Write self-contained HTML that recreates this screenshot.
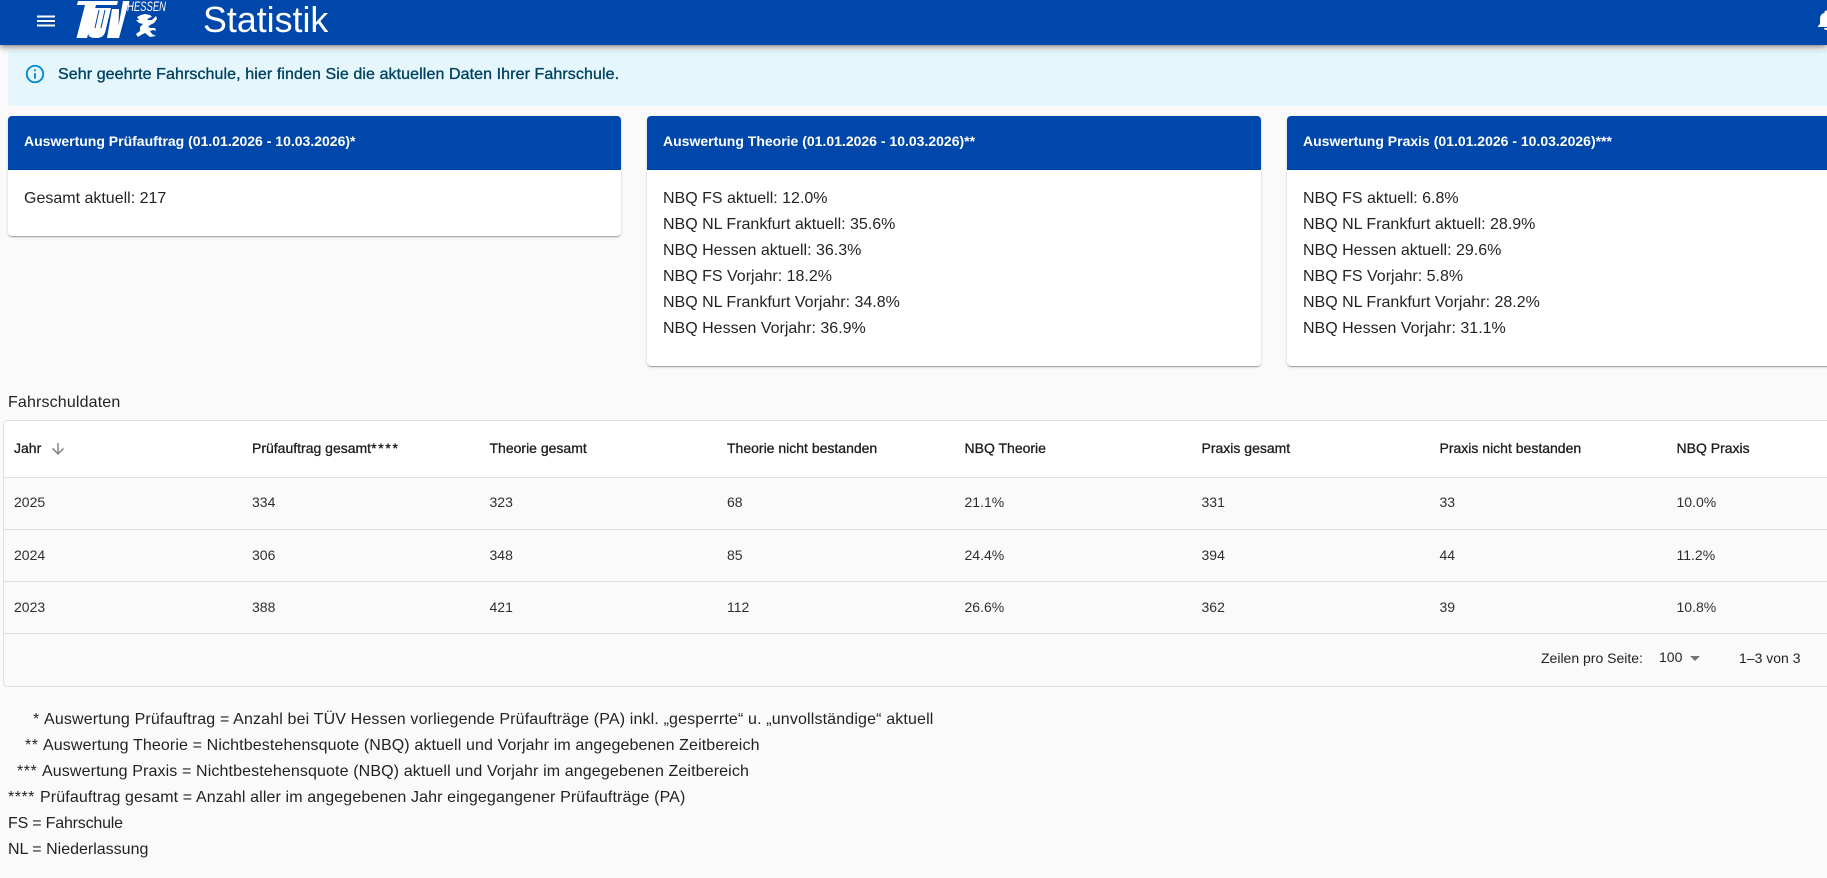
<!DOCTYPE html>
<html lang="de"><head><meta charset="utf-8"><title>Statistik</title>
<style>
html,body{margin:0;padding:0;width:1827px;height:878px;overflow:hidden;background:#fafafa}
body{font-family:"Liberation Sans",sans-serif;color:rgba(0,0,0,.87);position:relative}
.a{position:absolute;white-space:pre;line-height:20px}
#hdr{position:absolute;left:0;top:0;width:1827px;height:45px;background:#0047ab;box-shadow:0 2px 4px -1px rgba(0,0,0,.3),0 4px 5px rgba(0,0,0,.14),0 1px 10px rgba(0,0,0,.12);z-index:5}
#alert{position:absolute;left:8px;top:50px;width:1830px;height:56px;background:#e5f6fd;border-radius:4px}
.card{position:absolute;top:116px;width:614px;background:#fff;border-radius:4px;box-shadow:0 2px 1px -1px rgba(0,0,0,.2),0 1px 1px rgba(0,0,0,.14),0 1px 3px rgba(0,0,0,.12);overflow:hidden}
.ch{height:54px;background:#0047ab;color:#fff;font-size:14px;font-weight:700;line-height:50px;padding-left:16px;white-space:pre}
.cb{padding:16px 16px 0;font-size:16px;line-height:26px}
.cb div{height:26px;white-space:pre}
#tbl{position:absolute;left:3px;top:420px;width:1860px;height:265px;border:1px solid #e0e0e0;border-radius:4px;background:#fafafa;overflow:hidden}
#thead{position:absolute;left:0;top:0;right:0;height:56px;background:#fff}
.l{position:absolute;left:0;right:0;height:1px;background:#e0e0e0}
.t{position:absolute;font-size:14px;line-height:20px;white-space:pre;color:rgba(0,0,0,.82)}
.h{font-size:14px;color:rgba(0,0,0,.87);-webkit-text-stroke:.3px rgba(0,0,0,.87)}
.h i{font-style:normal;letter-spacing:1.7px}
.n{position:absolute;font-size:16px;line-height:26px;white-space:pre}
.s{letter-spacing:.5px}
</style></head><body>
<div id="hdr">
<svg style="position:absolute;left:37px;top:15px" width="18" height="12" viewBox="0 0 18 12"><path d="M0 0.5h18v2H0zM0 5h18v2H0zM0 9.5h18v2H0z" fill="#fff"/></svg>
<svg style="position:absolute;left:74px;top:0" width="96" height="40" viewBox="0 0 96 40">
<path d="M4 1H44L43 5H22L13 38H2.500L11 5H3Z" fill="#fff"/>
<path d="M19 8H37L31.500 31C30 37 26 38 22 38C16 38 13 36 14.500 31Z" fill="#fff"/>
<path d="M38 9H45L44.500 26L49 1H55L45 38H33Z" fill="#fff"/>
<path d="M25 10L21 28M31 10L27 28" stroke="#0047ab" stroke-width="1"/>
<text x="53" y="11" font-family="Liberation Sans" font-style="italic" font-size="14" fill="#fff" textLength="39" lengthAdjust="spacingAndGlyphs">HESSEN</text>
<path d="M63 17L67 15L71 14L76 15L78 17L75 18L73 20L78 20L82 16L83 19L80 23L76 25L74 27L77 28L81 28L82 31L79 30L76 31L78 34L82 36L76 37L71 33L67 35L64 37L62 34L66 31L66 27L69 24L65 23L62 20L65 20Z" fill="#fff"/>
</svg>
<div class="a" style="left:203px;top:0;font-size:35.800px;line-height:40px;color:#fff">Statistik</div>
<svg style="position:absolute;left:1814px;top:8px" width="24" height="24" viewBox="0 0 24 24"><path d="M12 22c1.100 0 2-.9 2-2h-4c0 1.100.9 2 2 2zm6-6v-5c0-3.100-1.600-5.600-4.500-6.300V4c0-.8-.7-1.500-1.500-1.500s-1.500.7-1.500 1.500v.7C7.600 5.400 6 7.900 6 11v5l-2 2v1h16v-1z" fill="#fff"/></svg>
</div>

<div id="alert"></div>
<svg style="position:absolute;left:24px;top:63px" width="22" height="22" viewBox="0 0 24 24"><path d="M11 7h2v2h-2zm0 4h2v6h-2zm1-9C6.480 2 2 6.480 2 12s4.480 10 10 10 10-4.480 10-10S17.520 2 12 2zm0 18c-4.410 0-8-3.590-8-8s3.590-8 8-8 8 3.590 8 8-3.590 8-8 8z" fill="#0288d1"/></svg>
<div class="a" style="left:58px;top:65px;font-size:16px;letter-spacing:.09px;color:#014361;-webkit-text-stroke:.35px #014361">Sehr geehrte Fahrschule, hier finden Sie die aktuellen Daten Ihrer Fahrschule.</div>

<div class="card" style="left:8px;width:613px;height:120px"><div class="ch">Auswertung Prüfauftrag (01.01.2026 - 10.03.2026)*</div><div class="cb"><div>Gesamt aktuell: 217</div></div></div>
<div class="card" style="left:647px;height:250px"><div class="ch">Auswertung Theorie (01.01.2026 - 10.03.2026)**</div><div class="cb"><div>NBQ FS aktuell: 12.0%</div><div>NBQ NL Frankfurt aktuell: 35.6%</div><div>NBQ Hessen aktuell: 36.3%</div><div>NBQ FS Vorjahr: 18.2%</div><div>NBQ NL Frankfurt Vorjahr: 34.8%</div><div>NBQ Hessen Vorjahr: 36.9%</div></div></div>
<div class="card" style="left:1287px;height:250px"><div class="ch">Auswertung Praxis (01.01.2026 - 10.03.2026)***</div><div class="cb"><div>NBQ FS aktuell: 6.8%</div><div>NBQ NL Frankfurt aktuell: 28.9%</div><div>NBQ Hessen aktuell: 29.6%</div><div>NBQ FS Vorjahr: 5.8%</div><div>NBQ NL Frankfurt Vorjahr: 28.2%</div><div>NBQ Hessen Vorjahr: 31.1%</div></div></div>

<div class="a" style="left:8px;top:393px;font-size:16px;letter-spacing:.15px">Fahrschuldaten</div>

<div id="tbl">
<div id="thead"></div>
<div class="l" style="top:56px"></div><div class="l" style="top:108px"></div><div class="l" style="top:160px"></div><div class="l" style="top:212px"></div>
<div class="t h" style="left:10px;top:17px">Jahr</div>
<svg style="position:absolute;left:45px;top:19px" width="18" height="18" viewBox="0 0 24 24"><path d="m20 12-1.410-1.410L13 16.170V4h-2v12.170l-5.580-5.590L4 12l8 8z" fill="#858585"/></svg>
<div class="t h" style="left:248px;top:17px">Prüfauftrag gesamt<i>****</i></div>
<div class="t h" style="left:485.500px;top:17px">Theorie gesamt</div>
<div class="t h" style="left:723px;top:17px">Theorie nicht bestanden</div>
<div class="t h" style="left:960.500px;top:17px">NBQ Theorie</div>
<div class="t h" style="left:1197.500px;top:17px">Praxis gesamt</div>
<div class="t h" style="left:1435.500px;top:17px">Praxis nicht bestanden</div>
<div class="t h" style="left:1672.500px;top:17px">NBQ Praxis</div>

<div class="t" style="left:10px;top:71px">2025</div><div class="t" style="left:248px;top:71px">334</div><div class="t" style="left:485.500px;top:71px">323</div><div class="t" style="left:723px;top:71px">68</div><div class="t" style="left:960.500px;top:71px">21.1%</div><div class="t" style="left:1197.500px;top:71px">331</div><div class="t" style="left:1435.500px;top:71px">33</div><div class="t" style="left:1672.500px;top:71px">10.0%</div>
<div class="t" style="left:10px;top:124px">2024</div><div class="t" style="left:248px;top:124px">306</div><div class="t" style="left:485.500px;top:124px">348</div><div class="t" style="left:723px;top:124px">85</div><div class="t" style="left:960.500px;top:124px">24.4%</div><div class="t" style="left:1197.500px;top:124px">394</div><div class="t" style="left:1435.500px;top:124px">44</div><div class="t" style="left:1672.500px;top:124px">11.2%</div>
<div class="t" style="left:10px;top:176px">2023</div><div class="t" style="left:248px;top:176px">388</div><div class="t" style="left:485.500px;top:176px">421</div><div class="t" style="left:723px;top:176px">112</div><div class="t" style="left:960.500px;top:176px">26.6%</div><div class="t" style="left:1197.500px;top:176px">362</div><div class="t" style="left:1435.500px;top:176px">39</div><div class="t" style="left:1672.500px;top:176px">10.8%</div>

<div class="t" style="left:1537px;top:227px;color:rgba(0,0,0,.87)">Zeilen pro Seite:</div>
<div class="t" style="left:1655px;top:226px;color:rgba(0,0,0,.87)">100</div>
<svg style="position:absolute;left:1686px;top:235px" width="10" height="5" viewBox="0 0 10 5"><path d="M0 0h10L5 5z" fill="#757575"/></svg>
<div class="t" style="left:1735px;top:227px;color:rgba(0,0,0,.87)">1–3 von 3</div>
</div>

<div class="n s" style="left:33px;top:707px">*</div><div class="n" style="left:44px;top:707px;letter-spacing:.148px">Auswertung Prüfauftrag = Anzahl bei TÜV Hessen vorliegende Prüfaufträge (PA) inkl. „gesperrte“ u. „unvollständige“ aktuell</div>
<div class="n s" style="left:25px;top:733px">**</div><div class="n" style="left:43px;top:733px;letter-spacing:.12px">Auswertung Theorie = Nichtbestehensquote (NBQ) aktuell und Vorjahr im angegebenen Zeitbereich</div>
<div class="n s" style="left:17px;top:759px">***</div><div class="n" style="left:42px;top:759px;letter-spacing:.12px">Auswertung Praxis = Nichtbestehensquote (NBQ) aktuell und Vorjahr im angegebenen Zeitbereich</div>
<div class="n s" style="left:8px;top:785px">****</div><div class="n" style="left:40px;top:785px;letter-spacing:.12px">Prüfauftrag gesamt = Anzahl aller im angegebenen Jahr eingegangener Prüfaufträge (PA)</div>
<div class="n" style="left:8px;top:811px;letter-spacing:-.2px">FS = Fahrschule</div>
<div class="n" style="left:8px;top:837px">NL = Niederlassung</div>
</body></html>
